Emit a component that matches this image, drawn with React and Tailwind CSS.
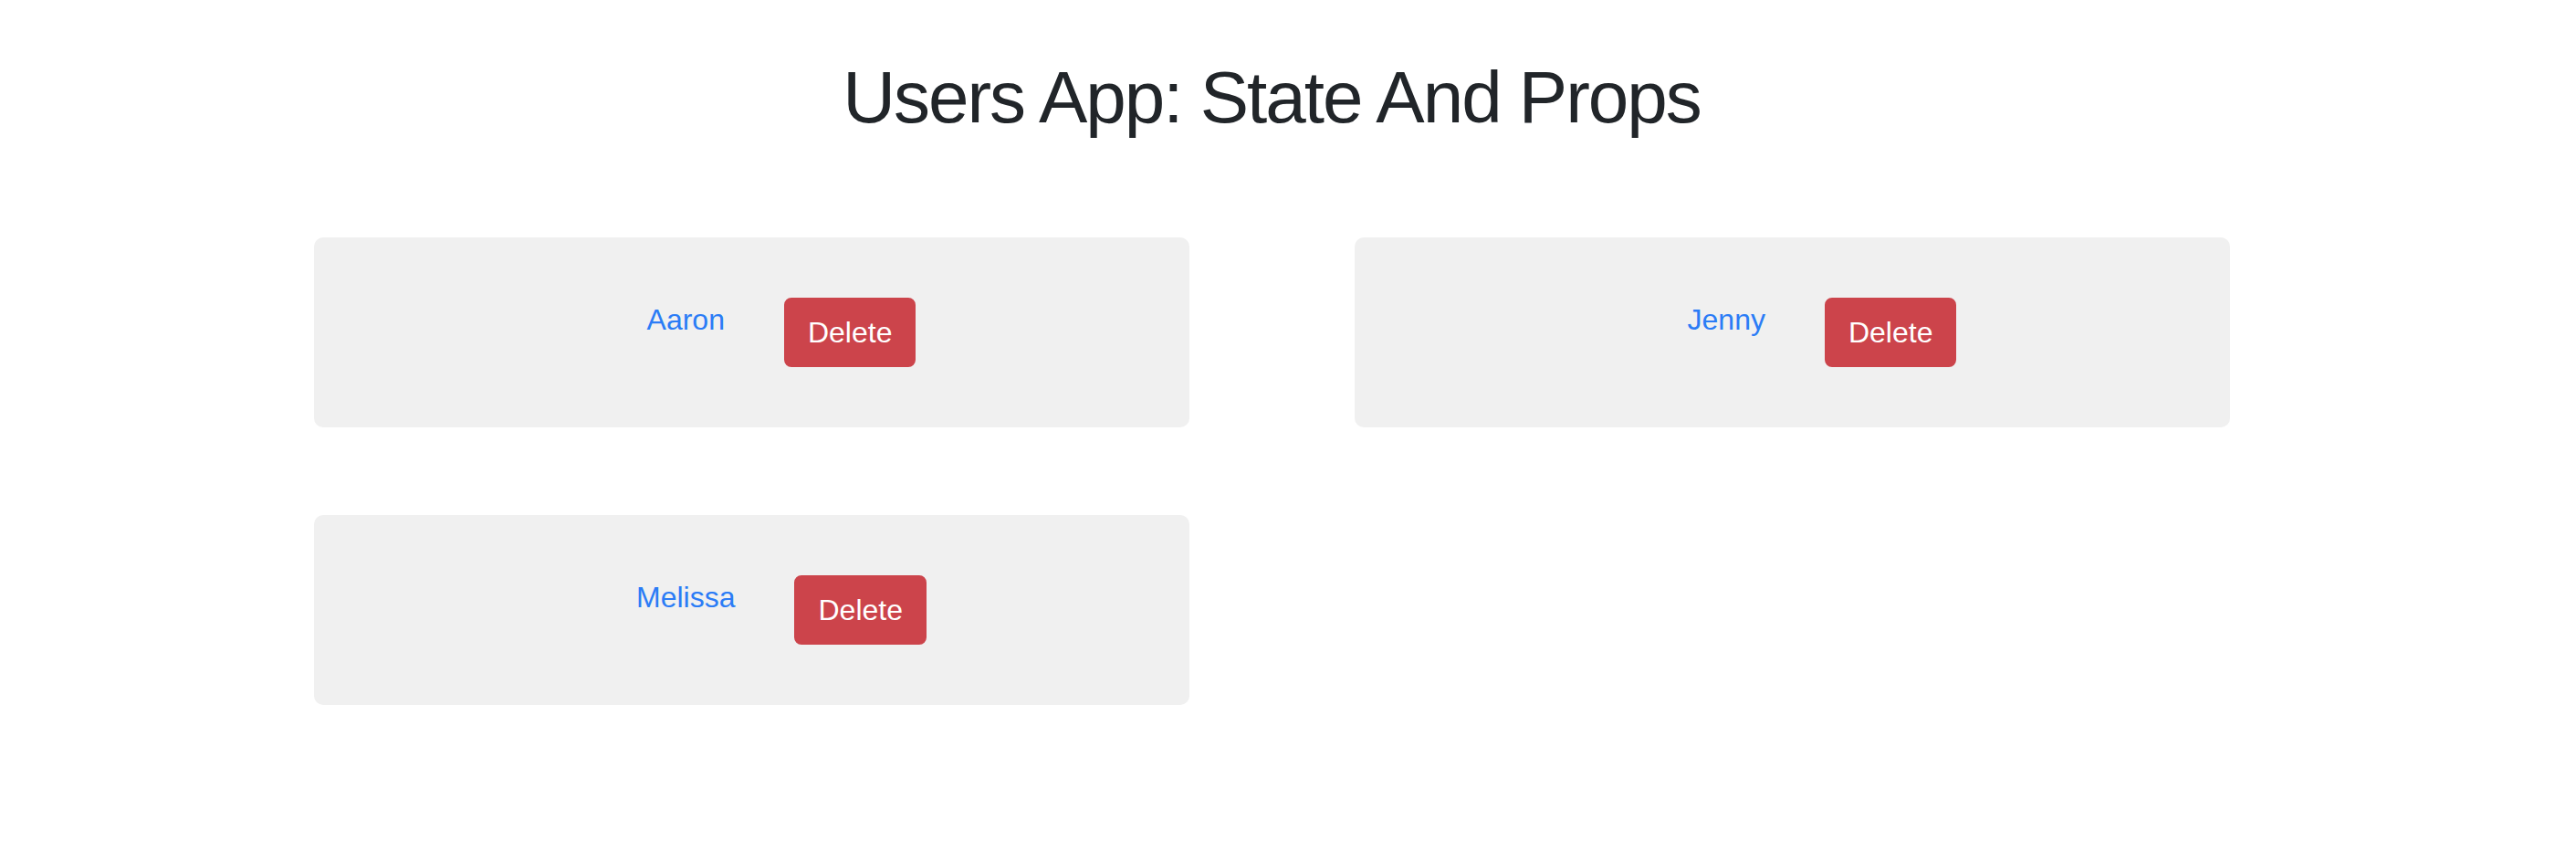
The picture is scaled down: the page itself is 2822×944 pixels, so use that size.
import { useState } from 'react';

const initialUsers = [
  { id: 1, name: 'Aaron' },
  { id: 2, name: 'Jenny' },
  { id: 3, name: 'Melissa' },
];

export default function App() {
  const [users, setUsers] = useState(initialUsers);

  const deleteUser = (id) => setUsers(users.filter(u => u.id !== id));

  return (
    <div className="min-h-[944px] bg-white w-[2786px] font-['Helvetica_Neue','Liberation_Sans',Arial,sans-serif]">
      <h1 className="text-center text-[80px] leading-[96px] font-normal tracking-[-2px] text-[#212529] pt-[59px]">
        Users App: State And Props
      </h1>

      <div className="grid grid-cols-[959px_959px] justify-center gap-x-[181px] gap-y-[96px] mt-[105px]">
        {users.map(user => (
          <div key={user.id} className="h-[208px] bg-[#f0f0f0] rounded-[10px] flex justify-center items-start pt-[66px] pl-[66px] gap-[65px]">
            <span className="text-[32px] leading-[48px] text-[#2b7cf6]">{user.name}</span>
            <button
              onClick={() => deleteUser(user.id)}
              className="bg-[#cc444b] text-white text-[32px] leading-[48px] px-[24px] py-[12px] border-2 border-[#cc444b] rounded-[8px]"
            >
              Delete
            </button>
          </div>
        ))}
      </div>
    </div>
  );
}
